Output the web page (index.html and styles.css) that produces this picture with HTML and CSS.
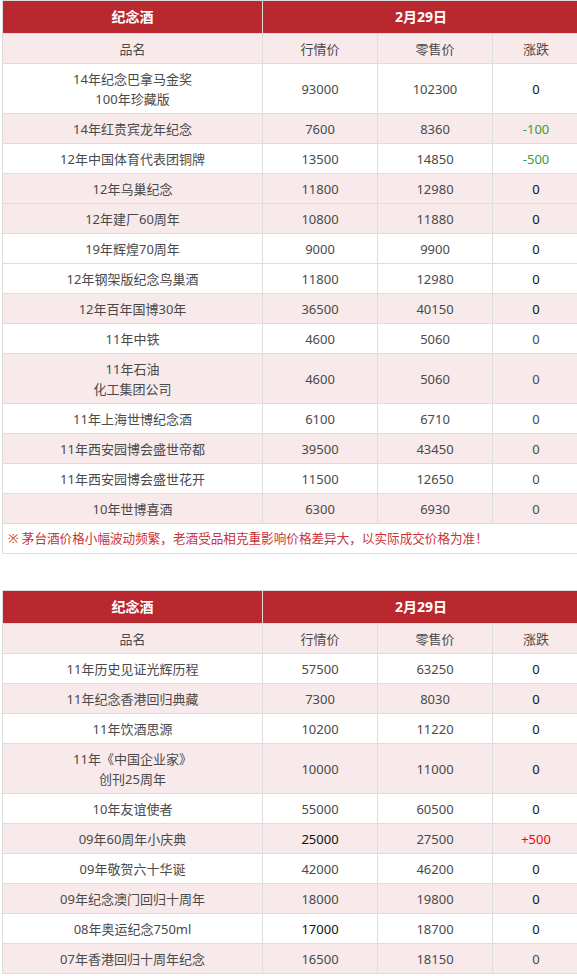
FILE: index.html
```html
<!DOCTYPE html>
<html lang="zh-CN">
<head>
<meta charset="utf-8">
<title>纪念酒价格</title>
<link rel="stylesheet" href="styles.css">
</head>
<body>
<div class="page">
<table class="price">
  <colgroup><col class="c1"><col class="c2"><col class="c3"><col class="c4"></colgroup>
  <tr class="head"><td>纪念酒</td><td colspan="3">2月29日</td></tr>
  <tr class="sub"><td>品名</td><td>行情价</td><td>零售价</td><td>涨跌</td></tr>
  <tr><td>14年纪念巴拿马金奖<br>100年珍藏版</td><td>93000</td><td>102300</td><td class="z">0</td></tr>
  <tr class="p"><td>14年红贵宾龙年纪念</td><td>7600</td><td>8360</td><td class="down">-100</td></tr>
  <tr><td>12年中国体育代表团铜牌</td><td>13500</td><td>14850</td><td class="down">-500</td></tr>
  <tr class="p"><td>12年乌巢纪念</td><td>11800</td><td>12980</td><td class="z">0</td></tr>
  <tr class="p"><td>12年建厂60周年</td><td>10800</td><td>11880</td><td class="z">0</td></tr>
  <tr><td>19年辉煌70周年</td><td>9000</td><td>9900</td><td class="z">0</td></tr>
  <tr><td>12年钢架版纪念鸟巢酒</td><td>11800</td><td>12980</td><td class="z">0</td></tr>
  <tr class="p"><td>12年百年国博30年</td><td>36500</td><td>40150</td><td class="z">0</td></tr>
  <tr><td>11年中铁</td><td>4600</td><td>5060</td><td>0</td></tr>
  <tr class="p"><td>11年石油<br>化工集团公司</td><td>4600</td><td>5060</td><td>0</td></tr>
  <tr><td>11年上海世博纪念酒</td><td>6100</td><td>6710</td><td>0</td></tr>
  <tr class="p"><td>11年西安园博会盛世帝都</td><td>39500</td><td>43450</td><td>0</td></tr>
  <tr><td>11年西安园博会盛世花开</td><td>11500</td><td>12650</td><td>0</td></tr>
  <tr class="p"><td>10年世博喜酒</td><td>6300</td><td>6930</td><td>0</td></tr>
  <tr class="note"><td colspan="4">※ 茅台酒价格小幅波动频繁，老酒受品相克重影响价格差异大，以实际成交价格为准！</td></tr>
</table>

<table class="price second">
  <colgroup><col class="c1"><col class="c2"><col class="c3"><col class="c4"></colgroup>
  <tr class="head"><td>纪念酒</td><td colspan="3">2月29日</td></tr>
  <tr class="sub"><td>品名</td><td>行情价</td><td>零售价</td><td>涨跌</td></tr>
  <tr><td>11年历史见证光辉历程</td><td>57500</td><td>63250</td><td class="z">0</td></tr>
  <tr class="p"><td>11年纪念香港回归典藏</td><td>7300</td><td>8030</td><td class="z">0</td></tr>
  <tr><td>11年饮酒思源</td><td>10200</td><td>11220</td><td class="z">0</td></tr>
  <tr class="p"><td>11年《中国企业家》<br>创刊25周年</td><td>10000</td><td>11000</td><td class="z">0</td></tr>
  <tr><td>10年友谊使者</td><td>55000</td><td>60500</td><td class="z">0</td></tr>
  <tr class="p"><td>09年60周年小庆典</td><td class="dk">25000</td><td>27500</td><td class="up">+500</td></tr>
  <tr><td>09年敬贺六十华诞</td><td>42000</td><td>46200</td><td class="z">0</td></tr>
  <tr class="p"><td>09年纪念澳门回归十周年</td><td>18000</td><td>19800</td><td class="z">0</td></tr>
  <tr><td>08年奥运纪念750ml</td><td class="dk">17000</td><td>18700</td><td class="z">0</td></tr>
  <tr class="p"><td>07年香港回归十周年纪念</td><td>16500</td><td>18150</td><td>0</td></tr>
</table>
</div>
</body>
</html>
```

FILE: styles.css
```css
html, body {
  margin: 0;
  padding: 0;
  background: #fff;
  overflow: hidden;
}
.page {
  padding-left: 2px;
  width: 600px;
}
.price {
  border-collapse: collapse;
  table-layout: fixed;
  width: 577px;
  font-family: "Noto Sans", "Noto Sans CJK SC", sans-serif;
  font-size: 13px;
  color: #4a4a4a;
}
.price .c1 { width: 260px; }
.price .c2 { width: 115px; }
.price .c3 { width: 115px; }
.price .c4 { width: 87px; }
.price td {
  border: 1px solid #dddddd;
  text-align: center;
  line-height: 20px;
  padding: 5px 2px 4px;
}
.price .head td {
  background: #b8282e;
  color: #fff;
  font-weight: bold;
  font-size: 14px;
  line-height: 22px;
  padding: 5px 2px;
}
.price .sub td {
  background: #f8e9ea;
  color: #4a4a4a;
}
.price tr.p td {
  background: #f8e9ea;
}
.price td.z { color: #111; }
.price td.dk { color: #111; }
.price td.down { color: #3e9a3e; }
.price td.up { color: #f00; }
.price .note td {
  text-align: left;
  color: #c8343a;
  font-size: 12.6px;
  padding: 5px 5px 4px;
  background: #fff;
}
.second {
  margin-top: 36px;
}
```
